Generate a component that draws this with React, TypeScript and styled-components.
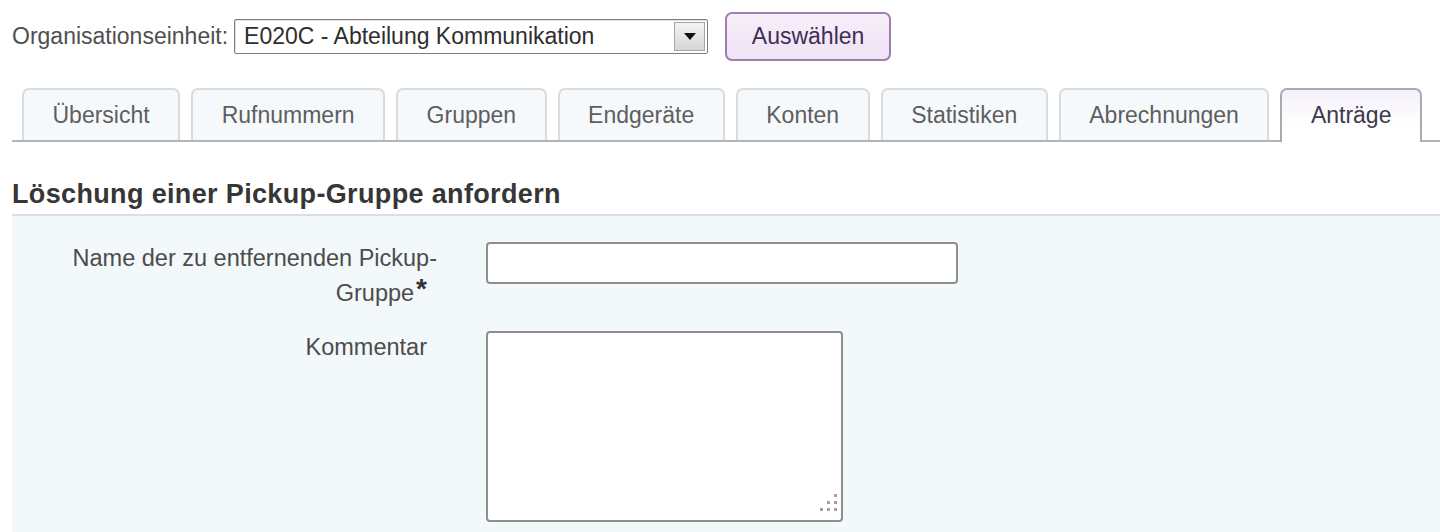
import React from "react";
import styled, { createGlobalStyle } from "styled-components";

const GlobalStyle = createGlobalStyle`
  html, body {
    margin: 0;
    padding: 0;
    background: #ffffff;
    font-family: "Liberation Sans", Arial, sans-serif;
    font-size: 23px;
    color: #444;
  }
  * { box-sizing: border-box; }
`;

const Page = styled.div`
  padding-left: 12px;
  height: 532px;
  overflow: hidden;
`;

const TopBar = styled.div`
  display: flex;
  align-items: center;
  height: 61px;
  padding-top: 12px;
`;

const TopLabel = styled.span`
  color: #4f4f4f;
  margin-right: 6px;
`;

const SelectBox = styled.div`
  display: flex;
  align-items: stretch;
  width: 474px;
  height: 35px;
  border: 1px solid #7c7c7c;
  border-radius: 2px;
  background: #fff;
  box-shadow: inset 1px 1px 0 #e2e2e2;
`;

const SelectValue = styled.span`
  flex: 1;
  display: flex;
  align-items: center;
  padding-left: 9px;
  color: #2e2e2e;
`;

const ArrowButton = styled.span`
  width: 31px;
  margin: 2px;
  display: flex;
  align-items: center;
  justify-content: center;
  border: 1px solid #a6a6a6;
  background: linear-gradient(#f4f4f4, #d6d6d6);
`;

const PickButton = styled.button`
  margin-left: 17px;
  width: 166px;
  height: 49px;
  font: inherit;
  color: #3e2d55;
  border: 2px solid #9a80aa;
  border-radius: 7px;
  background: linear-gradient(#f7effa, #efe2f5);
  cursor: pointer;
`;

const TabRow = styled.div`
  display: flex;
  gap: 11px;
  margin-top: 27px;
  padding-left: 10px;
  border-bottom: 2px solid #b1b5b9;
  height: 54px;
`;

const Tab = styled.div<{ $active?: boolean }>`
  height: ${(p) => (p.$active ? "54px" : "52px")};
  padding: ${(p) => (p.$active ? "0 28.5px 2px" : "0 28.5px")};
  display: flex;
  align-items: center;
  justify-content: center;
  border: ${(p) => (p.$active ? "2px solid #ababaf" : "2px solid #d8dcdf")};
  border-bottom: none;
  border-radius: 7px 7px 0 0;
  background: ${(p) =>
    p.$active ? "linear-gradient(#f5f0fb, #ffffff 70%)" : "#f6f9fc"};
  color: ${(p) => (p.$active ? "#3c3a4a" : "#5e5e5e")};
  white-space: nowrap;
`;

const TabSpacer = styled.div`
  flex: 1;
`;

const Heading = styled.h2`
  margin: 0;
  margin-top: 37px;
  padding-bottom: 4px;
  font-size: 27px;
  line-height: 31px;
  font-weight: bold;
  color: #363636;
  letter-spacing: 0.35px;
  border-bottom: 2px solid #d8e0e6;
`;

const Panel = styled.div`
  background: #f3f8fb;
  padding-top: 26px;
  min-height: 320px;
`;

const FormRow = styled.div`
  display: flex;
  align-items: flex-start;
  margin-bottom: 20px;
`;

const Label = styled.label`
  width: 415px;
  flex: none;
  text-align: right;
  line-height: 35px;
  margin-top: -1px;
  font-size: 23.5px;
  color: #4c4c4c;
`;

const LabelLine = styled.span`
  display: block;
  margin-right: -10px;
  white-space: nowrap;
`;

const Required = styled.span`
  color: #333;
  font-size: 28px;
  font-weight: bold;
  vertical-align: top;
  line-height: 26px;
  margin-left: 2px;
`;

const TextInput = styled.input`
  margin-left: 59px;
  width: 472px;
  height: 42px;
  border: 2px solid #8e8e8e;
  border-radius: 4px;
  background: #fff;
  font: inherit;
`;

const AreaWrap = styled.div`
  position: relative;
  margin-left: 59px;
  width: 357px;
  height: 191px;
`;

const TextArea = styled.textarea`
  display: block;
  width: 100%;
  height: 100%;
  border: 2px solid #8e8e8e;
  border-radius: 4px;
  background: #fff;
  font: inherit;
  resize: none;
`;

const Grip = styled.svg`
  position: absolute;
  right: 6px;
  bottom: 10px;
  pointer-events: none;
`;

const tabs = [
  "Übersicht",
  "Rufnummern",
  "Gruppen",
  "Endgeräte",
  "Konten",
  "Statistiken",
  "Abrechnungen",
  "Anträge",
];

export default function App() {
  return (
    <>
      <GlobalStyle />
      <Page>
        <TopBar>
          <TopLabel>Organisationseinheit:</TopLabel>
          <SelectBox>
            <SelectValue>E020C - Abteilung Kommunikation</SelectValue>
            <ArrowButton>
              <svg width="12" height="7" viewBox="0 0 12 7">
                <path d="M0 0h12L6 7z" fill="#111" />
              </svg>
            </ArrowButton>
          </SelectBox>
          <PickButton>Auswählen</PickButton>
        </TopBar>

        <TabRow>
          {tabs.map((t) => (
            <Tab key={t} $active={t === "Anträge"}>
              {t}
            </Tab>
          ))}
          <TabSpacer />
        </TabRow>

        <Heading>Löschung einer Pickup-Gruppe anfordern</Heading>

        <Panel>
          <FormRow>
            <Label>
              <LabelLine>Name der zu entfernenden Pickup-</LabelLine>
              Gruppe<Required>*</Required>
            </Label>
            <TextInput type="text" />
          </FormRow>
          <FormRow>
            <Label>Kommentar</Label>
            <AreaWrap>
              <TextArea />
              <Grip width="18" height="18" viewBox="0 0 18 18">
                <g fill="#a2a2a2">
                  <rect x="15" y="0" width="3" height="3" />
                  <rect x="8" y="7" width="3" height="3" />
                  <rect x="15" y="7" width="3" height="3" />
                  <rect x="1" y="14" width="3" height="3" />
                  <rect x="8" y="14" width="3" height="3" />
                  <rect x="15" y="14" width="3" height="3" />
                </g>
              </Grip>
            </AreaWrap>
          </FormRow>
        </Panel>
      </Page>
    </>
  );
}
